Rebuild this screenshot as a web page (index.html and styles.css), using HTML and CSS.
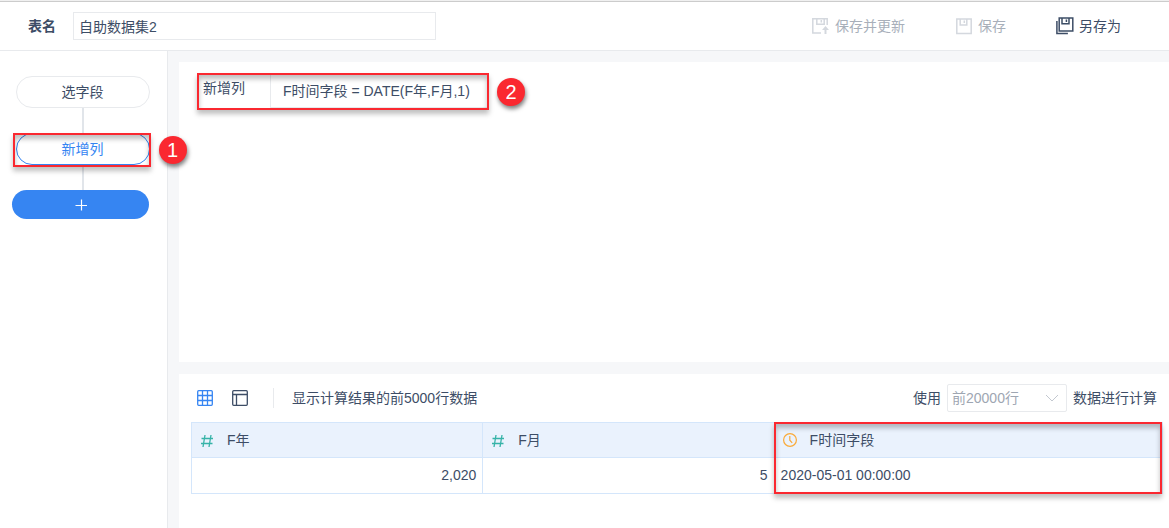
FILE: index.html
```html
<!DOCTYPE html>
<html lang="zh-CN">

<head>
  <meta charset="UTF-8">
  <meta name="viewport" content="width=device-width, initial-scale=1.0">
  <title>自助数据集2</title>
  <link rel="stylesheet" href="styles.css">
</head>

<body>
  <header class="header">
    <label class="header-label" for="table-name">表名</label>
    <input class="header-input" id="table-name" type="text" value="自助数据集2">
    <div class="header-actions">
      <button class="action" type="button" disabled>
        <svg class="action-icon" viewBox="0 0 18 18" fill="none" stroke="currentColor" stroke-width="1.5">
          <path d="M15.2 8V1.8H.8V16H9" />
          <path d="M4.8 2v5.2h7.4V2M9.3 3v2.4" />
          <path d="M13.5 17v-5" stroke-width="2" />
          <path d="M10 13 13.5 9l3.5 4z" fill="currentColor" stroke="none" />
        </svg>
        保存并更新
      </button>
      <button class="action" type="button" disabled>
        <svg class="action-icon" viewBox="0 0 18 18" fill="none" stroke="currentColor" stroke-width="1.5">
          <path d="M1.8 2h14.4v14.4H1.8z" />
          <path d="M5.2 2v6h6.6V2M9.3 3.5v2.4" />
        </svg>
        保存
      </button>
      <button class="action" type="button">
        <svg class="action-icon" viewBox="0 0 18 18" fill="none" stroke="currentColor" stroke-width="1.5">
          <path d="M3.2 1h13.6v13H3.2z" />
          <path d="M6 1v5.8h7V1M10.4 2.5v2.4" />
          <path d="M.9 4v12.5h11" />
        </svg>
        另存为
      </button>
    </div>
  </header>

  <div class="workspace">
    <nav class="steps">
      <button class="step" type="button">选字段</button>
      <div class="step-line"></div>
      <div class="step-current">
        <button class="step step-active" type="button">新增列</button>
        <div class="callout callout-step"><span class="badge">1</span></div>
      </div>
      <div class="step-line"></div>
      <button class="step-add" type="button" aria-label="添加步骤">
        <svg width="12" height="12" viewBox="0 0 12 12" stroke="currentColor" stroke-width="1.2">
          <path d="M6.5 .5v11M.5 6.5h12" />
        </svg>
      </button>
    </nav>

    <main class="main">
      <section class="panel panel-formula">
        <div class="formula-row">
          <span class="formula-label">新增列</span>
          <span class="formula-text">F时间字段 = DATE(F年,F月,1)</span>
          <div class="callout callout-formula"><span class="badge">2</span></div>
        </div>
      </section>

      <section class="panel panel-preview">
        <div class="toolbar">
          <button class="view-button view-active" type="button" aria-label="表格视图">
            <svg width="16" height="16" viewBox="0 0 16 16" fill="none" stroke="currentColor" stroke-width="1.3">
              <rect x=".7" y=".7" width="14.6" height="14.6" rx="1" />
              <path d="M5.5 1v14M10.5 1v14M1 5.5h14M1 10.5h14" />
            </svg>
          </button>
          <button class="view-button" type="button" aria-label="字段视图">
            <svg width="16" height="16" viewBox="0 0 16 16" fill="none" stroke="currentColor" stroke-width="1.3">
              <rect x=".7" y=".7" width="14.6" height="14.6" rx="1" />
              <path d="M1 4.5h14M4.5 4.5V15" />
            </svg>
          </button>
          <span class="toolbar-text">显示计算结果的前5000行数据</span>
          <div class="row-limit">
            <label for="row-limit">使用</label>
            <div class="select-box">
              <select class="select" id="row-limit" disabled>
                <option>前20000行</option>
              </select>
              <svg class="select-arrow" width="14" height="8" viewBox="0 0 14 8" fill="none" stroke="currentColor">
                <path d="M1 1l6 6 6-6" />
              </svg>
            </div>
            <span>数据进行计算</span>
          </div>
        </div>

        <div class="table-box">
          <table class="table">
            <thead>
              <tr>
                <th>
                  <div class="field">
                    <svg class="field-icon icon-number" viewBox="0 0 14 14" fill="none" stroke="currentColor" stroke-width="1.3">
                      <path d="M5 2 3 14M11 2 9 14M1.5 5.5h11.5M1 10.5h11.5" />
                    </svg>
                    F年
                  </div>
                </th>
                <th>
                  <div class="field">
                    <svg class="field-icon icon-number" viewBox="0 0 14 14" fill="none" stroke="currentColor" stroke-width="1.3">
                      <path d="M5 2 3 14M11 2 9 14M1.5 5.5h11.5M1 10.5h11.5" />
                    </svg>
                    F月
                  </div>
                </th>
                <th>
                  <div class="field">
                    <svg class="field-icon icon-date" viewBox="0 0 14 14" fill="none" stroke="currentColor" stroke-width="1.2">
                      <circle cx="7" cy="7" r="6.4" />
                      <path d="M6.8 3v4.2l2.4 2.6" />
                    </svg>
                    F时间字段
                  </div>
                </th>
              </tr>
            </thead>
            <tbody>
              <tr>
                <td class="number">2,020</td>
                <td class="number">5</td>
                <td>2020-05-01 00:00:00</td>
              </tr>
            </tbody>
          </table>
          <div class="callout callout-column"></div>
        </div>
      </section>
    </main>
  </div>
</body>

</html>
```

FILE: styles.css
```css
* {
  margin: 0;
  padding: 0;
  box-sizing: border-box;
}

body {
  display: flex;
  flex-direction: column;
  min-height: 100vh;
  font-family: "Liberation Sans", "Noto Sans CJK SC", sans-serif;
  font-size: 14px;
  line-height: 20px;
  color: #3d4d66;
  background: #fff;
}

button, input, select {
  font: inherit;
  color: inherit;
  background: none;
  border: none;
}

/* header */

.header {
  display: flex;
  align-items: center;
  height: 51px;
  padding: 1px 48px 0 28px;
  border-top: 1px solid #f0f0f0;
  border-bottom: 1px solid #e8eaed;
  box-shadow: inset 0 1px #cccccc;
}

.header-label {
  width: 45px;
  font-weight: bold;
}

.header-input {
  flex: 0 1 363px;
  min-width: 0;
  height: 28px;
  padding: 0 5px;
  border: 1px solid #e8eaed;
}

.header-actions {
  display: flex;
  gap: 50px;
  margin-left: auto;
}

.action {
  display: flex;
  align-items: center;
  gap: 5px;
  white-space: nowrap;
}

.action:disabled {
  color: #a8afba;
}

.action-icon {
  width: 18px;
  height: 18px;
}

.action:disabled .action-icon {
  color: #d4d8de;
}

/* steps */

.workspace {
  display: flex;
  flex: 1;
}

.steps {
  display: flex;
  flex-direction: column;
  align-items: center;
  width: 168px;
  padding: 25px 18px 0 16px;
  border-right: 1px solid #e8eaed;
}

.step {
  display: block;
  width: 134px;
  height: 32px;
  border: 1px solid #e8eaed;
  border-radius: 16px;
}

.step-current {
  position: relative;
}

.step-active {
  color: #3685f2;
  border-color: #3685f2;
}

.step-line {
  width: 2px;
  height: 25px;
  background: #e1e5ea;
}

.step-add {
  display: flex;
  align-items: center;
  justify-content: center;
  align-self: flex-end;
  width: 137px;
  height: 29px;
  color: #fff;
  background: #3685f2;
  border-radius: 15px;
}

/* panels */

.main {
  display: flex;
  flex: 1;
  flex-direction: column;
  gap: 12px;
  min-width: 0;
  padding: 11px 0 0 11px;
  background: #f6f7f9;
}

.panel {
  background: #fff;
}

.panel-formula {
  height: 300px;
  padding: 12px 19px;
}

.formula-row {
  position: relative;
  display: inline-flex;
  padding: 0 2px 2px 5px;
}

.formula-label {
  width: 67px;
  padding-top: 4px;
}

.formula-text {
  min-width: 217px;
  padding: 7px 12px 6px;
  border-left: 1px solid #e8eaed;
  border-bottom: 1px solid #e8eaed;
}

.panel-preview {
  flex: 1;
  padding: 10px 6px 0 12px;
}

.toolbar {
  display: flex;
  align-items: center;
  height: 28px;
  padding: 0 6px;
}

.view-button {
  display: flex;
  margin-right: 19px;
}

.view-active {
  color: #3685f2;
}

.toolbar-text {
  margin-left: 6px;
  padding-left: 18px;
  border-left: 1px solid #e8eaed;
}

.row-limit {
  display: flex;
  align-items: center;
  gap: 6px;
  margin-left: auto;
}

.select-box {
  position: relative;
}

.select {
  display: block;
  width: 120px;
  height: 28px;
  padding: 0 4px;
  color: #9ea6b2;
  border: 1px solid #e8eaed;
  border-radius: 2px;
  appearance: none;
  opacity: 1;
}

.select-arrow {
  position: absolute;
  top: 10px;
  right: 8px;
  color: #c3c8d0;
  pointer-events: none;
}

/* table */

.table-box {
  position: relative;
  margin-top: 10px;
}

.table {
  width: 100%;
  table-layout: fixed;
  border-collapse: collapse;
}

.table th, .table td {
  height: 36px;
  padding: 0 6px;
  text-align: left;
  font-weight: normal;
  border: 1px solid #d4e6fb;
}

.table th {
  width: 30%;
  height: 35px;
  background: #eaf2fd;
}

.table th:last-child {
  width: 40%;
}

.table td {
  padding-bottom: 2px;
}

.table .number {
  text-align: right;
}

.field {
  display: flex;
  align-items: center;
  gap: 13px;
  padding-left: 2px;
}

.field-icon {
  width: 14px;
  height: 14px;
}

.icon-number {
  color: #36b3a8;
}

.icon-date {
  color: #faaa39;
}

/* callouts */

.callout {
  position: absolute;
  border: 2px solid #fa2830;
  box-shadow: 0 4px 5px rgba(0, 0, 0, 0.25), inset 0 4px 5px rgba(0, 0, 0, 0.25);
  pointer-events: none;
}

.callout-step {
  inset: 0 -1px -2px -3px;
}

.callout-formula {
  inset: -1px 0 0 -1px;
}

.callout-column {
  inset: 0 1px 0 60%;
}

.badge {
  position: absolute;
  top: 50%;
  left: 100%;
  width: 28px;
  height: 28px;
  margin: -14px 0 0 10px;
  font-size: 20px;
  line-height: 28px;
  text-align: center;
  color: #fff;
  background: #fa2830;
  border-radius: 50%;
  box-shadow: 1px 3px 4px rgba(0, 0, 0, 0.5);
}
```
